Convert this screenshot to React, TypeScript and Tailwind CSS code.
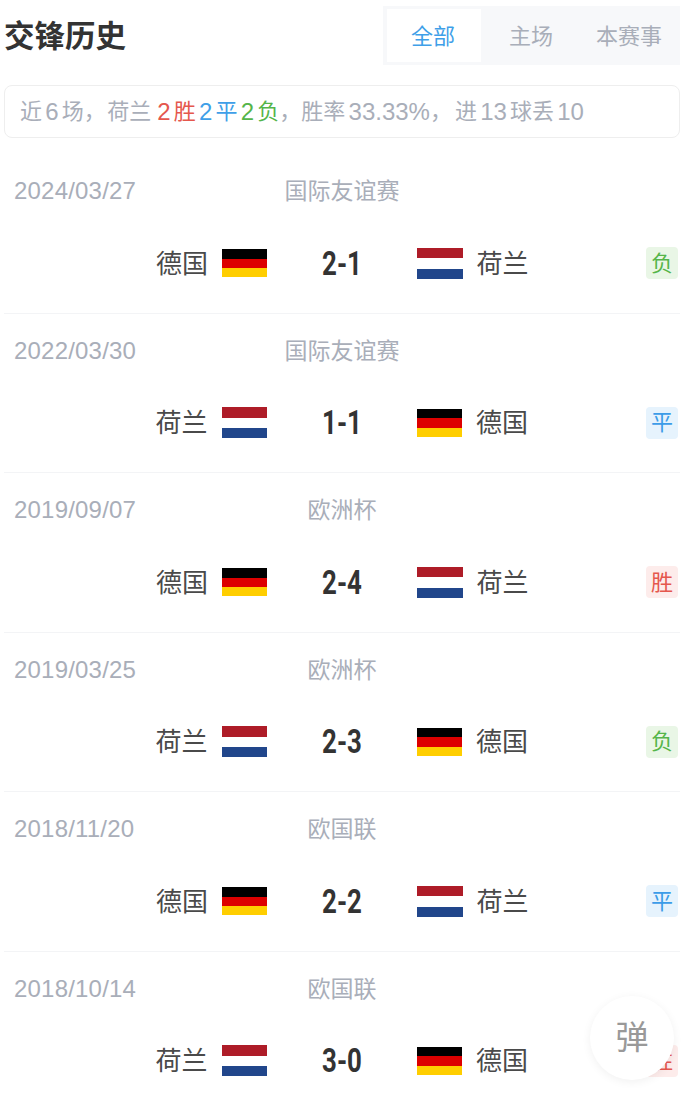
const cjk = "font-['Roboto','Noto_Sans_CJK_SC',sans-serif]"

const matches = [
  { date: "2024/03/27", league: "国际友谊赛", home: "德国", away: "荷兰", score: "2-1", result: "负" },
  { date: "2022/03/30", league: "国际友谊赛", home: "荷兰", away: "德国", score: "1-1", result: "平" },
  { date: "2019/09/07", league: "欧洲杯", home: "德国", away: "荷兰", score: "2-4", result: "胜" },
  { date: "2019/03/25", league: "欧洲杯", home: "荷兰", away: "德国", score: "2-3", result: "负" },
  { date: "2018/11/20", league: "欧国联", home: "德国", away: "荷兰", score: "2-2", result: "平" },
  { date: "2018/10/14", league: "欧国联", home: "荷兰", away: "德国", score: "3-0", result: "胜" },
]

function Flag({ team }: { team: string }) {
  if (team === "德国") {
    return (
      <div className="flex h-[28px] w-[45px] shrink-0 flex-col">
        <div className="flex-1 bg-[#000000]" />
        <div className="flex-1 bg-[#dd0000]" />
        <div className="flex-1 bg-[#ffce00]" />
      </div>
    )
  }
  return (
    <div className="flex h-[31px] w-[45.5px] shrink-0 flex-col">
      <div className="flex-1 bg-[#ae1c28]" />
      <div className="flex-1 bg-white" />
      <div className="flex-1 bg-[#21468b]" />
    </div>
  )
}

function ResultBadge({ result }: { result: string }) {
  const color =
    result === "胜"
      ? "bg-[#fdeceb] text-[#e5574d]"
      : result === "平"
        ? "bg-[#e6f3fd] text-[#3c9ce8]"
        : "bg-[#e9f6e6] text-[#55b54a]"
  return (
    <div className={`mr-[2px] ml-auto flex h-[32px] w-[32px] items-center justify-center rounded-[4px] text-[22px] ${color}`}>
      {result}
    </div>
  )
}

function Num({ children, className = "" }: { children: string; className?: string }) {
  return <span className={`mx-[3.2px] font-['Liberation_Sans',sans-serif] text-[24px] ${className}`}>{children}</span>
}

function MatchRow({ match }: { match: (typeof matches)[number] }) {
  return (
    <div className="h-[159.5px] border-b border-[#f3f4f6] pt-[19.1px]">
      <div className="grid h-[32px] grid-cols-[1fr_150px_1fr] items-center text-[23px] text-[#a9aeb9]">
        <div className="pb-[2px] pl-[10px] font-['Liberation_Sans',sans-serif] text-[24px] tracking-[0.2px]">{match.date}</div>
        <div className="text-center whitespace-nowrap">{match.league}</div>
        <div />
      </div>
      <div className="mt-[32.5px] grid h-[40px] grid-cols-[1fr_150px_1fr] items-center text-[26px] text-[#4a4a4a]">
        <div className="flex items-center justify-end gap-[14px]">
          <span className="pt-[2px]">{match.home}</span>
          <Flag team={match.home} />
        </div>
        <div className="scale-x-[0.76] text-center text-[34px] font-bold text-[#333333]">{match.score}</div>
        <div className="flex items-center gap-[14px]">
          <Flag team={match.away} />
          <span className="pt-[2px]">{match.away}</span>
          <ResultBadge result={match.result} />
        </div>
      </div>
    </div>
  )
}

export default function App() {
  return (
    <div className={`relative h-[1108px] overflow-hidden bg-white pr-[9px] pl-[4px] ${cjk}`}>
      <header className="flex h-[85px] items-start justify-between pt-[6px]">
        <h1 className="mt-[10px] text-[30.5px] leading-[42px] font-bold text-[#333333]">交锋历史</h1>
        <div className="flex h-[59px] w-[297px] items-stretch bg-[#f7f8fa] py-[3px] pr-[3px] pl-[4px] text-[22px] text-[#a9aeb9]">
          <div className="flex w-[94px] items-center justify-center bg-white pt-[1px] pr-[2px] text-[#3f9fe8]">全部</div>
          <div className="flex w-[100px] items-center justify-center pt-[1px]">主场</div>
          <div className="flex w-[96px] items-center justify-center pt-[1px]">本赛事</div>
        </div>
      </header>
      <div className="flex h-[53px] items-center rounded-[8px] border border-[#eeeeee] pl-[15px] text-[22px] whitespace-pre text-[#a9aeb9]">
        <span>近</span>
        <Num>6</Num>
        <span>场，</span>
        <span className="ml-[1.5px]">荷兰</span>
        <Num className="ml-[6px] text-[#e5574d]">2</Num>
        <span className="text-[#e5574d]">胜</span>
        <Num className="text-[#3f9fe8]">2</Num>
        <span className="text-[#3f9fe8]">平</span>
        <Num className="text-[#55b54a]">2</Num>
        <span className="text-[#55b54a]">负</span>
        <span>，胜率</span>
        <Num className="mr-0">33.33%</Num>
        <span>，</span>
        <span className="ml-[3px]">进</span>
        <Num>13</Num>
        <span>球丢</span>
        <Num>10</Num>
      </div>
      <div className="mt-[16.4px]">
        {matches.map((match) => (
          <MatchRow key={match.date} match={match} />
        ))}
      </div>
      <div className="absolute top-[996px] left-[590px] flex h-[84px] w-[84px] items-center justify-center rounded-full bg-white text-[33px] text-[#999999] shadow-[0_2px_10px_rgba(0,0,0,0.06)]">
        弹
      </div>
    </div>
  )
}
